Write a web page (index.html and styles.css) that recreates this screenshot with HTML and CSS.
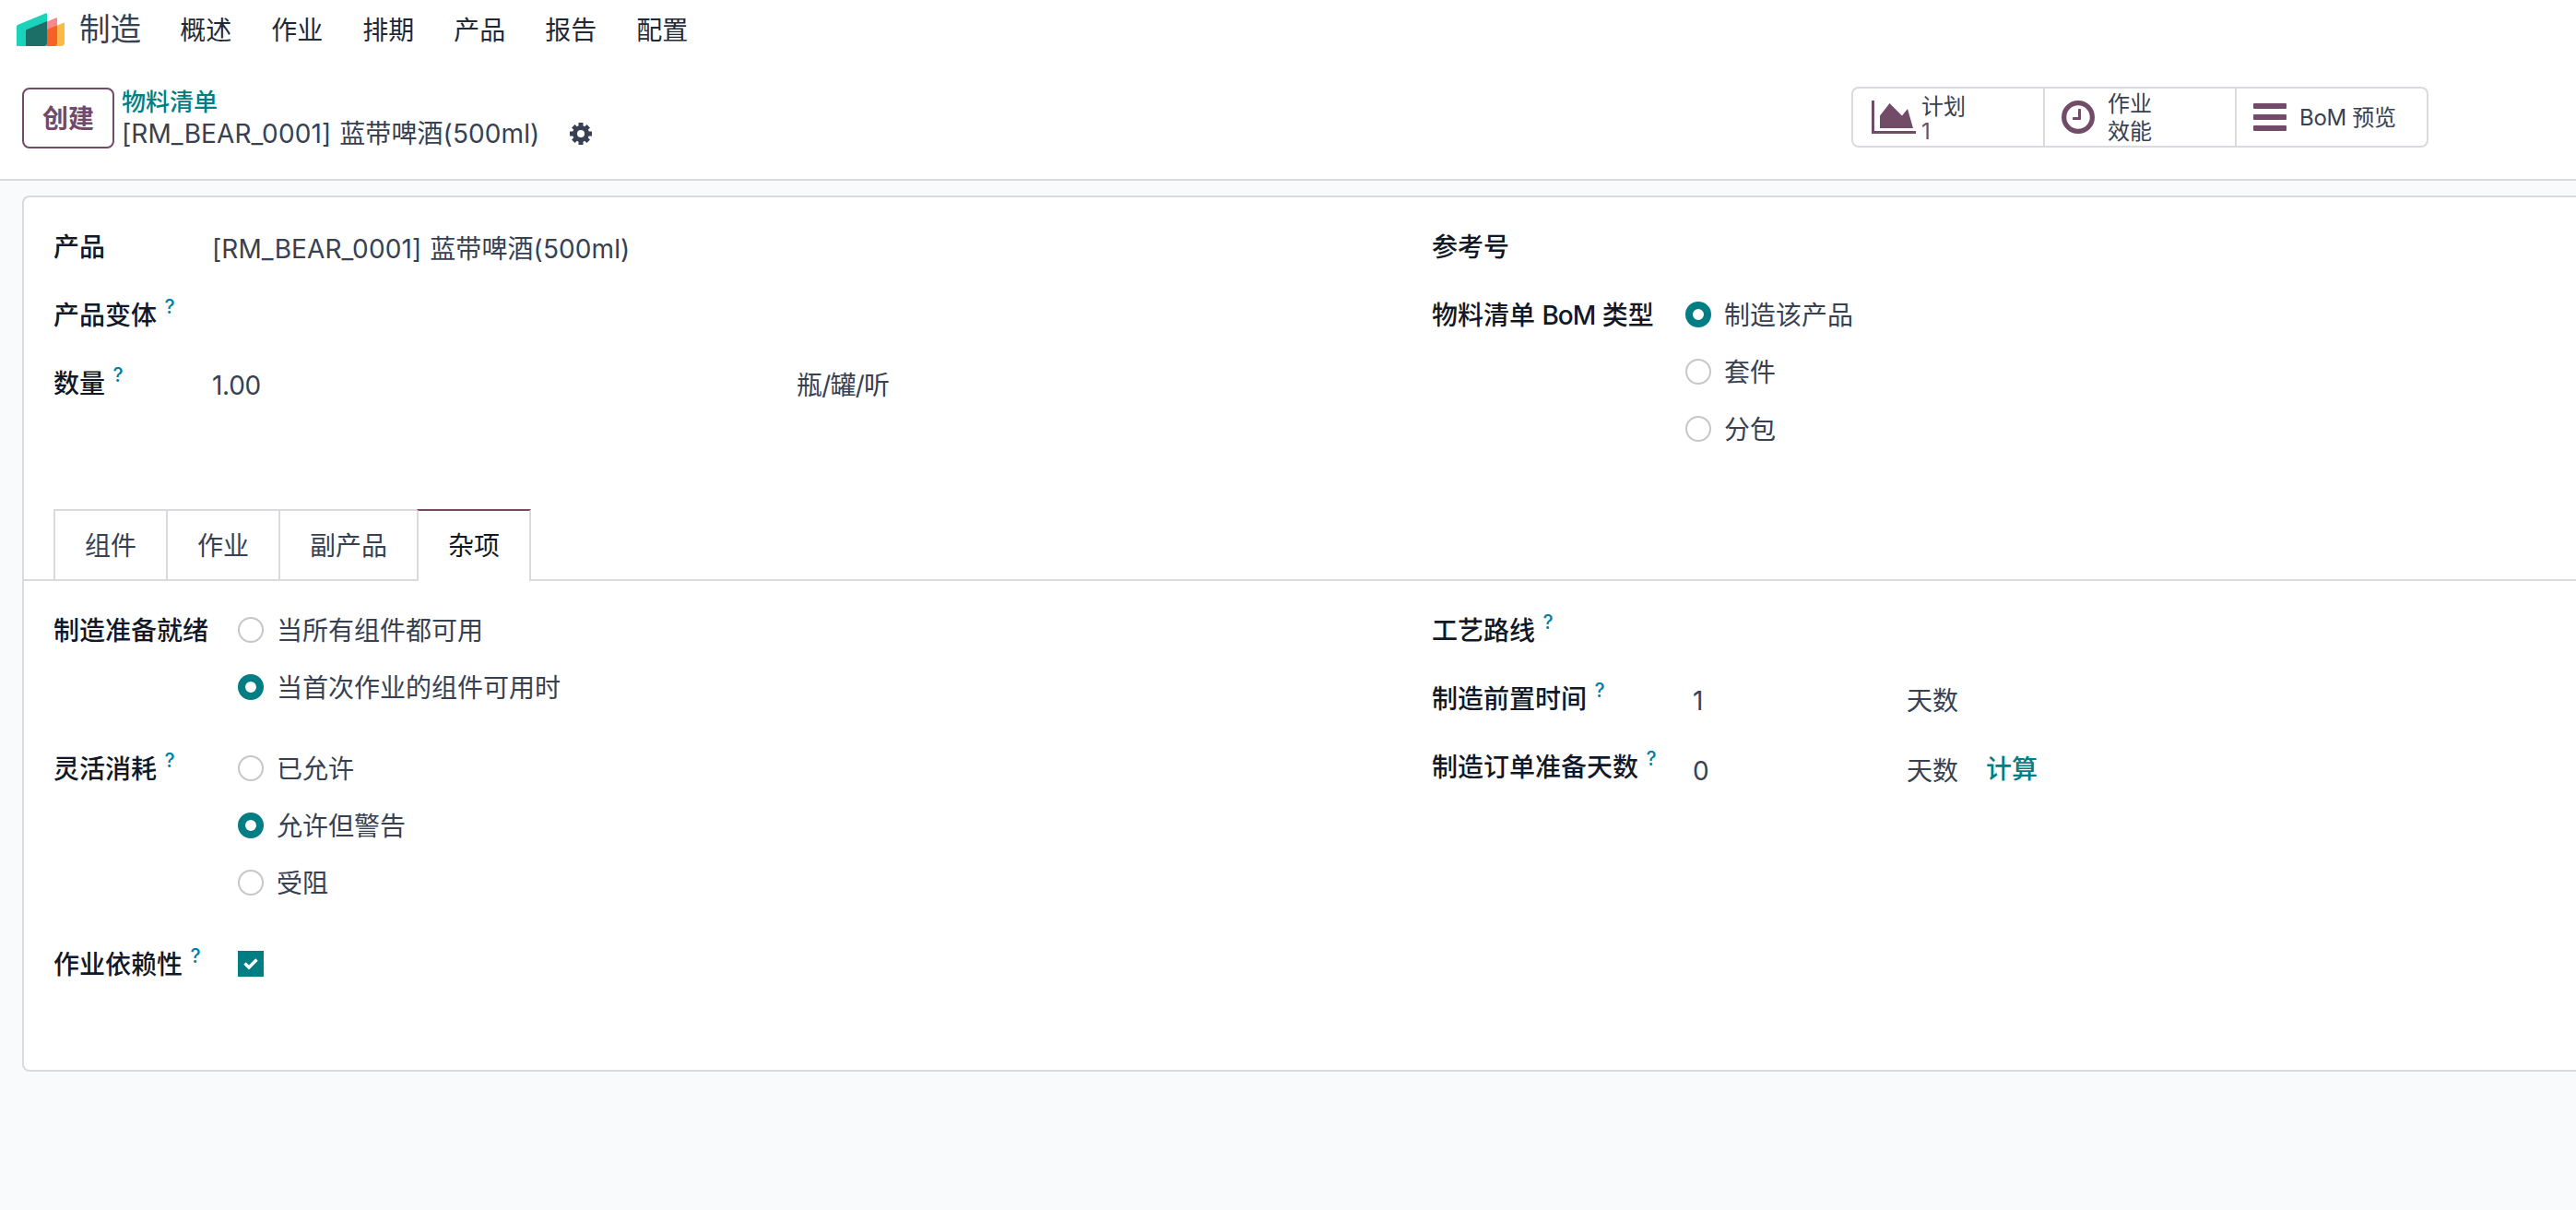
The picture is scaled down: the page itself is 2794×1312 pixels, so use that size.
FILE: index.html
```html
<!DOCTYPE html>
<html lang="zh-CN">
<head>
    <meta charset="UTF-8">
    <meta name="viewport" content="width=device-width, initial-scale=1.0">
    <title>制造 - 物料清单</title>
    <link rel="stylesheet" href="styles.css">
</head>
<body>
    <header class="navbar">
        <svg class="logo" viewBox="0 0 52 36">
            <path fill="#fbb945" d="M33 18L51 10.800Q52 10.500 52 11.500V32a4 4 0 0 1-4 4H33z"/>
            <path fill="#fc868b" d="M22 14L43 5.300Q44 5 44 6v30H22z"/>
            <path fill="#f86126" d="M33 18L44 13.500V32a4 4 0 0 1-4 4H33z"/>
            <path fill="#1ad3bb" d="M0 14.500Q0 13.500 1 13L32 .3Q33 0 33 1v31a4 4 0 0 1-4 4H1Q0 36 0 35z"/>
            <path fill="#1b6f66" d="M10 19.500Q10 18.500 11 18L33 9v23a4 4 0 0 1-4 4H11Q10 36 10 35z"/>
        </svg>
        <span class="brand">制造</span>
        <nav class="menu">
            <a>概述</a>
            <a>作业</a>
            <a>排期</a>
            <a>产品</a>
            <a>报告</a>
            <a>配置</a>
        </nav>
    </header>

    <div class="control-panel">
        <button class="btn-create">创建</button>
        <div class="breadcrumb">
            <a class="crumb-link">物料清单</a>
            <div class="crumb-current">
                <span class="product-name">[RM_BEAR_0001] 蓝带啤酒(500ml)</span>
                <svg class="gear" viewBox="0 0 24 24">
                    <path fill="none" stroke="currentColor" stroke-width="5" d="M12 0v24M0 12h24M3.800 3.800l16.400 16.400M20.200 3.800L3.800 20.200"/>
                    <circle cx="12" cy="12" r="9" fill="currentColor"/>
                    <circle cx="12" cy="12" r="4" fill="#fff"/>
                </svg>
            </div>
        </div>
        <div class="stat-buttons">
            <div class="stat">
                <svg class="icon-chart" viewBox="0 0 2048 1536"><path d="M2048 1408v128H0V0h128v1408zM1664 384l256 896H384V704l448-576 576 576z"/></svg>
                <div class="stat-text plan">
                    <span>计划</span>
                    <span class="stat-value">1</span>
                </div>
            </div>
            <div class="stat">
                <svg class="icon-clock" viewBox="0 0 1536 1536">
                    <circle cx="768" cy="768" r="656" fill="none" stroke="currentColor" stroke-width="224"/>
                    <path d="M896 416v448q0 32-32 32H544q-32 0-32-32v-64q0-32 32-32h224V416q0-32 32-32h64q32 0 32 32z"/>
                </svg>
                <div class="stat-text wide-lines">
                    <span>作业</span>
                    <span>效能</span>
                </div>
            </div>
            <div class="stat">
                <svg class="icon-bars" viewBox="0 0 36 30">
                    <rect width="36" height="6" rx="1"/>
                    <rect y="12" width="36" height="6" rx="1"/>
                    <rect y="24" width="36" height="6" rx="1"/>
                </svg>
                <div class="stat-text">
                    <span class="preview">BoM 预览</span>
                </div>
            </div>
        </div>
    </div>

    <main class="content">
        <div class="sheet">
            <div class="group group-top">
                <div class="column">
                    <div class="field">
                        <label>产品</label>
                        <div class="value product-name">[RM_BEAR_0001] 蓝带啤酒(500ml)</div>
                    </div>
                    <div class="field">
                        <label>产品变体 <sup>?</sup></label>
                    </div>
                    <div class="field">
                        <label>数量 <sup>?</sup></label>
                        <div class="value quantity">1.00</div>
                        <div class="value unit">瓶/罐/听</div>
                    </div>
                </div>
                <div class="column column-right">
                    <div class="field">
                        <label>参考号</label>
                    </div>
                    <div class="field">
                        <label>物料清单 <span class="bom">BoM</span> 类型</label>
                        <div class="radios">
                            <div class="radio"><i class="dot checked"></i>制造该产品</div>
                            <div class="radio"><i class="dot"></i>套件</div>
                            <div class="radio"><i class="dot"></i>分包</div>
                        </div>
                    </div>
                </div>
            </div>

            <div class="tabs">
                <div class="tab">组件</div>
                <div class="tab">作业</div>
                <div class="tab">副产品</div>
                <div class="tab active">杂项</div>
            </div>

            <div class="group group-bottom">
                <div class="column">
                    <div class="field">
                        <label>制造准备就绪</label>
                        <div class="radios">
                            <div class="radio"><i class="dot"></i>当所有组件都可用</div>
                            <div class="radio"><i class="dot checked"></i>当首次作业的组件可用时</div>
                        </div>
                    </div>
                    <div class="field">
                        <label>灵活消耗 <sup>?</sup></label>
                        <div class="radios">
                            <div class="radio"><i class="dot"></i>已允许</div>
                            <div class="radio"><i class="dot checked"></i>允许但警告</div>
                            <div class="radio"><i class="dot"></i>受阻</div>
                        </div>
                    </div>
                    <div class="field">
                        <label>作业依赖性 <sup>?</sup></label>
                        <svg class="checkbox" viewBox="0 0 28 28">
                            <rect width="28" height="28" fill="#017e84"/>
                            <path fill="none" stroke="#fff" stroke-width="3.400" d="M7.500 13.500l4.500 4.500 8.500-8.500"/>
                        </svg>
                    </div>
                </div>
                <div class="column column-right">
                    <div class="field">
                        <label>工艺路线 <sup>?</sup></label>
                    </div>
                    <div class="field">
                        <label>制造前置时间 <sup>?</sup></label>
                        <div class="value days">1</div>
                        <div class="value">天数</div>
                    </div>
                    <div class="field field-last">
                        <label>制造订单准备天数 <sup>?</sup></label>
                        <div class="value days">0</div>
                        <div class="value">天数</div>
                        <a class="compute">计算</a>
                    </div>
                </div>
            </div>
        </div>
    </main>
</body>
</html>
```
FILE: styles.css
```css
:root {
    --primary: #714b67;
    --teal: #017e84;
    --border: #d8dadd;
    --text: #374151;
    --text-dark: #111827;
    --bg: #f9fafb;
}

* {
    box-sizing: border-box;
}

body {
    margin: 0;
    height: 1312px;
    overflow: hidden;
    background-color: var(--bg);
    color: var(--text);
    font-family: 'Inter', 'Noto Sans CJK SC', sans-serif;
    font-size: 28px;
    line-height: 44px;
}

svg {
    display: block;
    flex: none;
    fill: currentColor;
}

/* Top menu */
.navbar {
    display: flex;
    align-items: center;
    height: 64px;
    padding-left: 18px;
    background-color: white;
}

.logo {
    width: 52px;
    height: 36px;
}

.brand {
    margin-left: 16px;
    font-size: 33.6px;
}

.menu {
    display: flex;
    gap: 43px;
    margin-left: 42px;
    padding-top: 1px;
    color: #1f2937;
}

/* Breadcrumb row */
.control-panel {
    display: flex;
    align-items: flex-start;
    height: 132px;
    padding: 30px 0 0 24px;
    background-color: white;
    border-bottom: 2px solid var(--border);
}

.btn-create {
    width: 100px;
    height: 66px;
    margin-top: 1px;
    padding: 0 0 2px;
    border: 2px solid var(--primary);
    border-radius: 8px;
    background: white;
    color: var(--primary);
    font-family: inherit;
    font-size: 28px;
    font-weight: 600;
}

.breadcrumb {
    width: 1876px;
    margin-left: 8px;
}

.crumb-link {
    display: block;
    height: 34px;
    line-height: 34px;
    color: var(--teal);
    font-size: 26px;
    font-weight: 500;
}

.crumb-current {
    display: flex;
    align-items: center;
    height: 34px;
}

.product-name {
    letter-spacing: 0.1px;
    word-spacing: 1px;
}

.gear {
    width: 24px;
    height: 24px;
    margin-left: 33px;
}

.stat-buttons {
    display: flex;
    width: 626px;
    height: 66px;
    border: 2px solid var(--border);
    border-radius: 8px;
}

.stat {
    display: flex;
    flex: 1;
    align-items: center;
    padding-left: 18px;
    font-size: 24px;
    color: var(--primary);
}

.stat + .stat {
    border-left: 2px solid var(--border);
}

.stat-text {
    display: flex;
    flex-direction: column;
    line-height: 27px;
    color: var(--text);
}

.plan {
    padding-top: 3px;
}

.wide-lines {
    padding-top: 1px;
    line-height: 30px;
}

.stat-value {
    color: var(--primary);
}

.icon-chart {
    width: 48px;
    height: 36px;
    margin: 0 6px 0 2px;
}

.icon-clock {
    width: 36px;
    height: 36px;
    margin-right: 14px;
}

.icon-bars {
    width: 36px;
    height: 30px;
    margin-right: 14px;
}

.preview {
    letter-spacing: -0.3px;
}

.bom {
    letter-spacing: -1px;
}

/* Form sheet, runs past the right edge */
.content {
    padding: 16px 0 0 24px;
}

.sheet {
    height: 950px;
    border: 2px solid var(--border);
    border-right: none;
    border-radius: 8px 0 0 8px;
    background-color: white;
}

.group {
    display: flex;
    padding-left: 32px;
}

.group-top {
    height: 338px;
    padding-top: 32px;
}

.group-bottom {
    padding-top: 32px;
}

.column {
    flex: none;
    width: 1495px;
}

.column-right {
    width: 1200px;
}

.field {
    display: flex;
    align-items: flex-start;
    margin-bottom: 32px;
}

label {
    flex: none;
    width: 200px;
    height: 42px;
    color: var(--text-dark);
    font-weight: 500;
    white-space: nowrap;
}

.group-top label {
    width: 172px;
}

.column-right label {
    width: 283px;
}

.group-top .column-right label {
    width: 275px;
}

sup {
    position: relative;
    top: -12px;
    margin-left: 1px;
    color: #0180a5;
    font-size: 21px;
    font-weight: 500;
    line-height: 0;
    vertical-align: baseline;
}

.value {
    height: 42px;
    padding-top: 2px;
    white-space: nowrap;
}

.quantity {
    width: 634px;
    letter-spacing: -0.3px;
}

.unit {
    letter-spacing: -0.8px;
}

.days {
    width: 232px;
}

.field-last .value {
    padding-top: 4px;
}

.radios {
    display: flex;
    flex-direction: column;
    gap: 20px;
    margin-bottom: 14px;
}

.radio {
    display: flex;
    gap: 14px;
    height: 42px;
}

.dot {
    width: 28px;
    height: 28px;
    margin-top: 7px;
    border: 2px solid #c6c7c9;
    border-radius: 50%;
}

.dot.checked {
    border: 8px solid var(--teal);
}

.checkbox {
    width: 28px;
    height: 28px;
    margin-top: 7px;
}

.compute {
    margin-left: 30px;
    padding-top: 2px;
    color: var(--teal);
    font-weight: 500;
}

/* Notebook tabs */
.tabs {
    display: flex;
    height: 78px;
    padding-left: 32px;
    border-bottom: 2px solid var(--border);
}

.tab {
    height: 76px;
    margin-right: -2px;
    padding: 16px 32px 0;
    border: 2px solid var(--border);
    border-bottom: none;
}

.tab.active {
    z-index: 1;
    height: 78px;
    border-top-color: var(--primary);
    background-color: white;
    color: var(--text-dark);
}
```
